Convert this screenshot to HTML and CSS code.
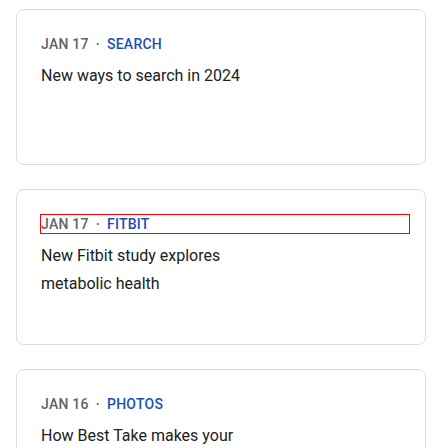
FILE: index.html
```html
<!DOCTYPE html>
<html lang="en">
<head>
<meta charset="utf-8">
<title>Latest stories</title>
<link rel="stylesheet" href="styles.css">
</head>
<body>
  <ul class="stories">
    <li class="card">
      <div class="eyebrow"><span class="date">Jan 17</span><span class="sep">·</span><span class="cat">Search</span></div>
      <h3 class="title">New ways to search in 2024</h3>
    </li>
    <li class="card">
      <div class="eyebrow focused"><span class="date">Jan 17</span><span class="sep">·</span><span class="cat">Fitbit</span></div>
      <h3 class="title">New Fitbit study explores metabolic health</h3>
    </li>
    <li class="card">
      <div class="eyebrow"><span class="date">Jan 16</span><span class="sep">·</span><span class="cat">Photos</span></div>
      <h3 class="title">How Best Take makes your group photos better</h3>
    </li>
  </ul>
</body>
</html>
```
FILE: styles.css
```css
html, body {
  margin: 0;
  padding: 0;
  background: #ffffff;
}

body {
  font-family: Roboto, "Noto Sans", Arial, sans-serif;
  color: #202124;
}

.stories {
  list-style: none;
  margin: 0;
  padding: 9px 22px 0 16px;
  display: flex;
  flex-direction: column;
  gap: 24px;
}

.card {
  box-sizing: border-box;
  height: 156px;
  border: 1px solid #dadce0;
  border-radius: 8px;
  padding: 25px 16px 0 24px;
  background: #fff;
}

.eyebrow {
  font-size: 14px;
  line-height: 18px;
  font-weight: 500;
  letter-spacing: 0.25px;
  text-transform: uppercase;
  white-space: nowrap;
}

.eyebrow.focused {
  outline: 1px solid #ff0000;
}

.date {
  color: #5f6368;
}

.sep {
  color: #5f6368;
  margin: 0 7px;
}

.cat {
  color: #1a4fb8;
}

.title {
  margin: 9px 0 0;
  font-size: 16px;
  line-height: 28px;
  font-weight: 400;
  color: #202124;
  width: 200px;
}
```
